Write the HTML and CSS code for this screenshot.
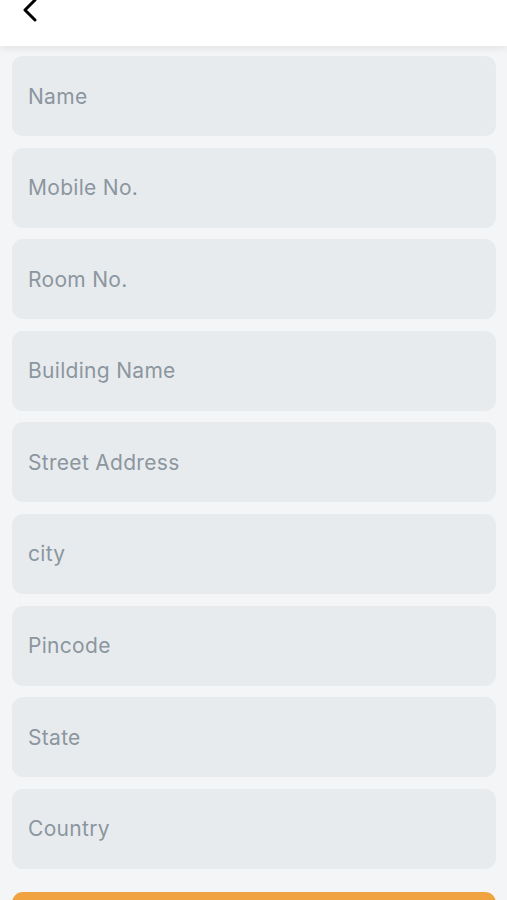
FILE: index.html
```html
<!DOCTYPE html>
<html lang="en">
<head>
  <meta charset="UTF-8">
  <title>Add Address</title>
  <link rel="stylesheet" href="styles.css">
</head>
<body>
  <header class="topbar">
    <button class="back" aria-label="Back">
      <svg width="18" height="24" viewBox="0 0 18 24">
        <path d="M15 2 L5 12 L15 22" fill="none" stroke="#000" stroke-width="3" stroke-linecap="round" stroke-linejoin="round"/>
      </svg>
    </button>
  </header>

  <form class="address-form">
    <input type="text" class="field" placeholder="Name">
    <input type="text" class="field" placeholder="Mobile No.">
    <input type="text" class="field" placeholder="Room No.">
    <input type="text" class="field" placeholder="Building Name">
    <input type="text" class="field" placeholder="Street Address">
    <input type="text" class="field" placeholder="city">
    <input type="text" class="field" placeholder="Pincode">
    <input type="text" class="field" placeholder="State">
    <input type="text" class="field" placeholder="Country">
    <button type="submit" class="save">Save Address</button>
  </form>
</body>
</html>
```

FILE: styles.css
```css
body {
  margin: 0;
  font-family: Inter, 'Open Sans', sans-serif;
  background-color: #f4f5f6;
}

.topbar {
  height: 46px;
  background: white;
  box-shadow: 0 2px 8px rgba(0,0,0,0.08);
  display: flex;
  align-items: flex-start;
  padding-left: 20px;
}

.back {
  border: none;
  background: none;
  padding: 0;
  margin-top: -2px;
  cursor: pointer;
}

.address-form {
  display: flex;
  flex-direction: column;
  gap: 11.6px;
  padding: 10px 11px 0 12px;
}

.field {
  height: 80px;
  box-sizing: border-box;
  border: none;
  border-radius: 11px;
  background: #e8ebee;
  padding: 0 16px;
  font-family: inherit;
  font-size: 21px;
  letter-spacing: 0.3px;
  color: #333;
}

.field::placeholder {
  color: #8b969f;
}

.save {
  margin-top: 12px;
  height: 56px;
  border: none;
  border-radius: 11px;
  background: #f0a33f;
  color: white;
  font-family: inherit;
  font-size: 20px;
  font-weight: 600;
}
```
